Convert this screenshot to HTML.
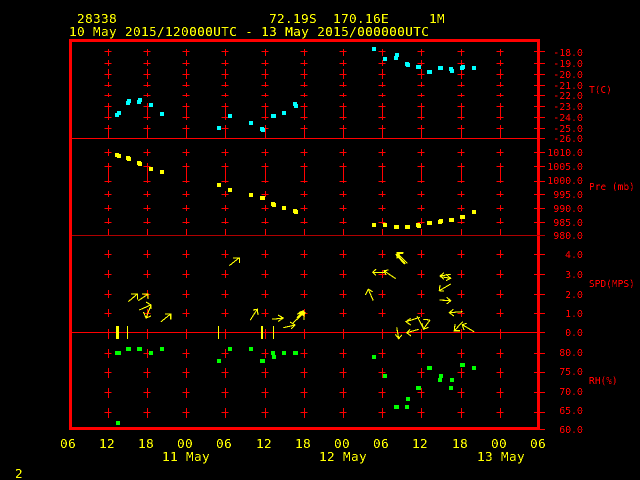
<!DOCTYPE html>
<html><head><meta charset="utf-8"><style>
html,body{margin:0;padding:0;background:#000;width:640px;height:480px;overflow:hidden}
svg{display:block}
text{font-family:"DejaVu Sans Mono","Liberation Mono",monospace;white-space:pre}
.y{fill:#ff0;font-size:12.8px;letter-spacing:.3px}
.r{fill:#f00;font-size:9.9px;text-anchor:end}
.l{fill:#f00;font-size:9.5px}
.m{text-anchor:middle}
</style></head><body>
<svg width="640" height="480" viewBox="0 0 640 480" xmlns="http://www.w3.org/2000/svg">
<rect width="640" height="480" fill="#000"/>
<defs>
<filter id="crisp" x="0" y="0" width="100%" height="100%" color-interpolation-filters="sRGB">
<feComponentTransfer><feFuncA type="discrete" tableValues="0 0 1 1"/></feComponentTransfer>
</filter>
<path id="col" stroke="#f00" stroke-width="1" fill="none" shape-rendering="crispEdges" d="M-3.5 51.5h7M-3.5 63.5h7M-3.5 74.5h7M-3.5 85.5h7M-3.5 95.5h7M-3.5 106.5h7M-3.5 117.5h7M-3.5 128.5h7M-3.5 152.5h7M-3.5 166.5h7M-3.5 181.5h7M-3.5 194.5h7M-3.5 208.5h7M-3.5 222.5h7M-3.5 254.5h7M-3.5 274.5h7M-3.5 294.5h7M-3.5 313.5h7M-3.5 353.5h7M-3.5 372.5h7M-3.5 392.5h7M-3.5 412.5h7M.5 49V56M.5 60V66M.5 69V79M.5 82V87M.5 93V97M.5 103V120M.5 125V138M.5 149V156M.5 163V183M.5 191V197M.5 205V211M.5 218V224M.5 229V235M.5 250V258M.5 270V278M.5 290V298M.5 309V317M.5 329V339M.5 349V358M.5 368V378M.5 388V398M.5 408V418"/>
</defs>
<use href="#col" x="108"/><use href="#col" x="147"/><use href="#col" x="186"/><use href="#col" x="225"/><use href="#col" x="265"/><use href="#col" x="304"/><use href="#col" x="343"/><use href="#col" x="382"/><use href="#col" x="421"/><use href="#col" x="461"/><use href="#col" x="500"/>

<!-- frame and axes -->
<g shape-rendering="crispEdges" fill="none" stroke="#f00">
<rect x="70.5" y="40.5" width="468" height="388" stroke-width="3"/>
<path d="M72 138.5H545M72 332.5H545" stroke-width="1"/>
<path d="M72 235.5H545" stroke-width="1" stroke="#b00000"/>
<path d="M534 51.5h11M534 63.5h11M534 74.5h11M534 85.5h11M534 95.5h11M534 106.5h11M534 117.5h11M534 128.5h11M534 152.5h11M534 166.5h11M534 181.5h11M534 194.5h11M534 208.5h11M534 222.5h11M534 254.5h11M534 274.5h11M534 294.5h11M534 313.5h11M534 353.5h11M534 372.5h11M534 392.5h11M534 412.5h11M534 429.5h11" stroke-width="1"/>
</g>

<!-- speed bars -->
<g shape-rendering="crispEdges" fill="#ff0">
<rect x="116" y="326" width="3" height="13"/>
<rect x="127" y="326" width="1" height="13"/>
<rect x="218" y="326" width="1" height="13"/>
<rect x="261" y="326" width="2" height="13"/>
<rect x="273" y="326" width="1" height="13"/>
</g>

<!-- T markers -->
<path fill="#0ff" shape-rendering="crispEdges" d="M115 113h4v4h-4zM117 111h4v4h-4zM126 101h4v4h-4zM127 99h4v4h-4zM137 100h4v4h-4zM138 98h4v4h-4zM149 103h4v4h-4zM160 112h4v4h-4zM217 126h4v4h-4zM228 114h4v4h-4zM249 121h4v4h-4zM260 127h4v4h-4zM261 128h4v4h-4zM271 114h4v4h-4zM272 114h4v4h-4zM282 111h4v4h-4zM293 102h4v4h-4zM294 104h4v4h-4zM372 47h4v4h-4zM383 57h4v4h-4zM394 56h4v4h-4zM395 53h4v4h-4zM405 62h4v4h-4zM406 63h4v4h-4zM416 65h4v4h-4zM417 65h4v4h-4zM427 70h4v4h-4zM428 70h4v4h-4zM438 66h4v4h-4zM439 66h4v4h-4zM449 67h4v4h-4zM450 69h4v4h-4zM460 66h4v4h-4zM461 65h4v4h-4zM472 66h4v4h-4z"/>
<!-- Pressure markers -->
<path fill="#ff0" shape-rendering="crispEdges" d="M115 153h4v4h-4zM117 154h4v4h-4zM126 156h4v4h-4zM127 157h4v4h-4zM137 161h4v4h-4zM138 162h4v4h-4zM149 167h4v4h-4zM160 170h4v4h-4zM217 183h4v4h-4zM228 188h4v4h-4zM249 193h4v4h-4zM260 196h4v4h-4zM261 196h4v4h-4zM271 202h4v4h-4zM272 203h4v4h-4zM282 206h4v4h-4zM293 209h4v4h-4zM294 210h4v4h-4zM372 223h4v4h-4zM383 223h4v4h-4zM394 225h4v4h-4zM395 225h4v4h-4zM405 225h4v4h-4zM406 225h4v4h-4zM416 223h4v4h-4zM417 224h4v4h-4zM427 221h4v4h-4zM428 221h4v4h-4zM438 220h4v4h-4zM439 219h4v4h-4zM449 218h4v4h-4zM450 218h4v4h-4zM460 215h4v4h-4zM461 215h4v4h-4zM472 210h4v4h-4z"/>
<!-- RH markers -->
<path fill="#0f0" shape-rendering="crispEdges" d="M115 351h4v4h-4zM117 351h4v4h-4zM126 347h4v4h-4zM127 347h4v4h-4zM137 347h4v4h-4zM138 347h4v4h-4zM149 351h4v4h-4zM160 347h4v4h-4zM217 359h4v4h-4zM228 347h4v4h-4zM249 347h4v4h-4zM260 359h4v4h-4zM261 359h4v4h-4zM271 351h4v4h-4zM272 355h4v4h-4zM282 351h4v4h-4zM293 351h4v4h-4zM294 351h4v4h-4zM116 421h4v4h-4zM372 355h4v4h-4zM383 374h4v4h-4zM394 405h4v4h-4zM395 405h4v4h-4zM405 405h4v4h-4zM406 397h4v4h-4zM416 386h4v4h-4zM417 386h4v4h-4zM427 366h4v4h-4zM428 366h4v4h-4zM438 378h4v4h-4zM439 374h4v4h-4zM449 386h4v4h-4zM450 378h4v4h-4zM460 363h4v4h-4zM461 363h4v4h-4zM472 366h4v4h-4z"/>

<!-- wind arrows -->
<g fill="none" stroke="#ff0" stroke-width="1.1" shape-rendering="crispEdges">
<path d="M128.3 301.7L137.3 294M131 294H137.3V299.5"/>
<path d="M138.3 300.7L148.3 294M142 294H148V299"/>
<path d="M139.3 310L150.7 305M146 302L151 305L151 309"/>
<path d="M150.7 306L146 318M143.5 312L146 318L151 316"/>
<path d="M161 321.7L170.7 314M165 314H170.7V319.5"/>
<path d="M229.3 265.7L239.3 257.7M233 258H239.5V263"/>
<path d="M250.3 320L257.3 309.3M253 310L257.3 309.3L258 315"/>
<path d="M272.3 319.3L283.3 318M278 315L283.3 318L278 321.5"/>
<path d="M283.3 327.7L295 325M290 322L295 325L291 329"/>
<path d="M293 323L304 312.7M297 314L304 312.7V320"/>
<path d="M297 318L303 312M299 313L304 311M303 316L305 312" stroke-width="2"/>
<path d="M407.3 263.3L397 252.7M397 258.3V252.7H403.3"/>
<path d="M405 264L396 254M398 258V253H403" stroke-width="2"/>
<path d="M385 272.3H372.7M376 269.3L372.7 272.3L376 275.3"/>
<path d="M395.7 278.7L384 270.7M388.3 270L384 270.7L386 275"/>
<path d="M373.3 300.7L368.3 289.3M365.3 295L368.3 289.3L372.7 291.7"/>
<path d="M450.7 274.3L440 276M444 272.7L440 276L444 279.3"/>
<path d="M440.7 276.7L450.7 278.3M446 280.7L450.7 278.3L446 274.3"/>
<path d="M450.7 284L439.3 290.7M440 285L439.3 290.7L444 291"/>
<path d="M439.3 300L450.7 300.7M446.7 297.3L450.7 300.7L446.7 304"/>
<path d="M462.3 311.7L449.3 312.7M453.3 309.3L449.3 312.7L454 316"/>
<path d="M462.7 321.7L454.3 330.7M455 324L454.3 330.7H460"/>
<path d="M474 331.7L462.3 324.7M466.7 323.3L462.3 324.7L464 330"/>
<path d="M420 317.3L406 321.7M410.7 318.3L406 321.7L410.7 325"/>
<path d="M418.7 329.3L406.7 332.7M410 329.3L406.7 332.7L411 336"/>
<path d="M396.7 327.3L398.7 338.7M395.3 334.3L398.7 338.7L401.7 335"/>
<path d="M417 316L423.7 329.3M421.7 323.3L423.7 329.3L428.3 327.3"/>
<path d="M430 320L423.3 319.3M430 320L423.3 329.3"/>
</g>

<g filter="url(#crisp)">
<!-- titles -->
<text class="y" x="77" y="23">28338</text>
<text class="y" x="269" y="23">72.19S</text>
<text class="y" x="333" y="23">170.16E</text>
<text class="y" x="429" y="23">1M</text>
<text class="y" x="69" y="36">10 May 2015/120000UTC - 13 May 2015/000000UTC</text>

<!-- x axis -->
<text class="y m" x="68" y="448">06</text>
<text class="y m" x="107" y="448">12</text>
<text class="y m" x="146" y="448">18</text>
<text class="y m" x="185" y="448">00</text>
<text class="y m" x="224" y="448">06</text>
<text class="y m" x="264" y="448">12</text>
<text class="y m" x="303" y="448">18</text>
<text class="y m" x="342" y="448">00</text>
<text class="y m" x="381" y="448">06</text>
<text class="y m" x="420" y="448">12</text>
<text class="y m" x="460" y="448">18</text>
<text class="y m" x="499" y="448">00</text>
<text class="y m" x="538" y="448">06</text>
<text class="y" x="162" y="461">11 May</text>
<text class="y" x="319" y="461">12 May</text>
<text class="y" x="477" y="461">13 May</text>
<text class="y" x="15" y="478">2</text>

<!-- y labels -->
<text class="r" x="583" y="56">-18.0</text>
<text class="r" x="583" y="67">-19.0</text>
<text class="r" x="583" y="78">-20.0</text>
<text class="r" x="583" y="89">-21.0</text>
<text class="r" x="583" y="99">-22.0</text>
<text class="r" x="583" y="110">-23.0</text>
<text class="r" x="583" y="121">-24.0</text>
<text class="r" x="583" y="132">-25.0</text>
<text class="r" x="583" y="142">-26.0</text>
<text class="r" x="583" y="156">1010.0</text>
<text class="r" x="583" y="170">1005.0</text>
<text class="r" x="583" y="184">1000.0</text>
<text class="r" x="583" y="198">995.0</text>
<text class="r" x="583" y="212">990.0</text>
<text class="r" x="583" y="226">985.0</text>
<text class="r" x="583" y="239">980.0</text>
<text class="r" x="583" y="258">4.0</text>
<text class="r" x="583" y="278">3.0</text>
<text class="r" x="583" y="298">2.0</text>
<text class="r" x="583" y="317">1.0</text>
<text class="r" x="583" y="336">0.0</text>
<text class="r" x="583" y="356">80.0</text>
<text class="r" x="583" y="375">75.0</text>
<text class="r" x="583" y="395">70.0</text>
<text class="r" x="583" y="414">65.0</text>
<text class="r" x="583" y="433">60.0</text>
<text class="l" x="589" y="93">T(C)</text>
<text class="l" x="589" y="190">Pre (mb)</text>
<text class="l" x="589" y="287">SPD(MPS)</text>
<text class="l" x="589" y="384">RH(%)</text>
</g>
</svg>
</body></html>
